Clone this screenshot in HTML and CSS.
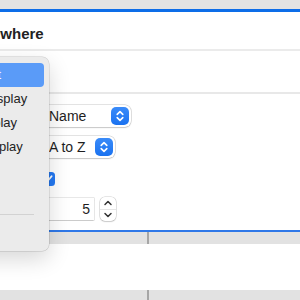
FILE: index.html
```html
<!DOCTYPE html>
<html lang="en">
<head>
  <meta charset="UTF-8" />
  <meta name="viewport" content="width=device-width, initial-scale=1.0"/>
  <title>Search Options</title>
  <link rel="stylesheet" href="styles.css">
</head>
<body>
  <div class="window">
    <div class="topbar"></div>
    <div class="title"><span class="title-text">Anywhere</span></div>
    <div class="toolbar"></div>

    <div class="form">
      <div class="popup popup-wide">
        <span class="popup-text">Name</span>
        <span class="popup-btn">
          <svg width="18" height="18" viewBox="0 0 18 18"><path d="M6.2 7.4 9 4.6 11.8 7.4M6.2 10.6 9 13.4 11.8 10.6" fill="none" stroke="#fff" stroke-width="1.6" stroke-linecap="round" stroke-linejoin="round"/></svg>
        </span>
      </div>

      <div class="popup">
        <span class="popup-text">A to Z</span>
        <span class="popup-btn">
          <svg width="18" height="18" viewBox="0 0 18 18"><path d="M6.2 7.4 9 4.6 11.8 7.4M6.2 10.6 9 13.4 11.8 10.6" fill="none" stroke="#fff" stroke-width="1.6" stroke-linecap="round" stroke-linejoin="round"/></svg>
        </span>
      </div>

      <div class="check-row">
        <span class="checkbox">
          <svg width="14" height="14" viewBox="0 0 14 14"><path d="M3.5 7.3 6 9.8 10.6 4.2" fill="none" stroke="#fff" stroke-width="1.8" stroke-linecap="round" stroke-linejoin="round"/></svg>
        </span>
      </div>

      <div class="number-row">
        <div class="number-field">5</div>
        <div class="stepper">
          <span class="step">
            <svg width="10" height="8" viewBox="0 0 10 8"><path d="M2 5.5 5 2.5 8 5.5" fill="none" stroke="#333" stroke-width="1.5" stroke-linecap="round" stroke-linejoin="round"/></svg>
          </span>
          <span class="step step-down">
            <svg width="10" height="8" viewBox="0 0 10 8"><path d="M2 2.5 5 5.5 8 2.5" fill="none" stroke="#333" stroke-width="1.5" stroke-linecap="round" stroke-linejoin="round"/></svg>
          </span>
        </div>
      </div>
    </div>

    <div class="table">
      <div class="table-head"><div class="col"></div><div class="col"></div></div>
      <div class="table-row"></div>
      <div class="table-head"><div class="col"></div><div class="col"></div></div>
    </div>
  </div>

  <!-- popup menu, left part scrolled out of view -->
  <div class="menu">
    <div class="menu-item active">Default</div>
    <div class="menu-item">Full Display</div>
    <div class="menu-item">In Display</div>
    <div class="menu-item">No Display</div>
    <div class="menu-item"></div>
    <div class="menu-item"></div>
    <div class="menu-sep"></div>
    <div class="menu-item"></div>
  </div>
</body>
</html>
```

FILE: styles.css
```css
body {
  margin: 0;
  background: #fff;
  font-family: "Liberation Sans", Arial, sans-serif;
  color: #1e1e1e;
  overflow: hidden;
  position: relative;
  width: 300px;
  height: 300px;
}

.topbar {
  height: 9px;
  background: #e3e3e3;
  border-bottom: 3px solid #0d6de8;
}

.title {
  height: 39px;
  box-sizing: border-box;
  padding-top: 12px;
  border-bottom: 2px solid #ebebeb;
  white-space: nowrap;
}

.title-text {
  display: inline-block;
  margin-left: -28px;
  font-size: 15px;
  font-weight: bold;
  line-height: 20px;
  color: #222;
}

.toolbar {
  height: 41px;
  border-bottom: 2px solid #e8e8e8;
}

.form {
  display: grid;
  row-gap: 9px;
  grid-auto-rows: 22px;
  padding: 11px 0 10px 41px;
  font-size: 14px;
  justify-items: start;
}

.popup {
  display: flex;
  align-items: center;
  height: 22px;
  box-sizing: border-box;
  padding: 0 2px 0 8px;
  background: #fff;
  border-radius: 6px;
  box-shadow: 0 0 0 0.5px rgba(0,0,0,0.22), 0 1px 1.5px rgba(0,0,0,0.12);
}

.popup-wide {
  width: 90px;
}

.popup-text {
  flex: 1;
  margin-right: 9px;
  white-space: nowrap;
}

.popup-btn {
  width: 18px;
  height: 18px;
  border-radius: 5px;
  background: linear-gradient(#3a8bf9, #1a72f0);
  display: flex;
}

.check-row {
  display: flex;
  align-items: center;
}

.checkbox {
  width: 14px;
  height: 14px;
  border-radius: 3.5px;
  background: #2479f3;
  display: flex;
  margin-top: 1px;
}

.number-row {
  display: flex;
  align-items: center;
  gap: 6px;
}

.number-field {
  width: 53px;
  height: 22px;
  box-sizing: border-box;
  padding-right: 4px;
  text-align: right;
  line-height: 22px;
  background: #fff;
  box-shadow: 0 0 0 0.5px rgba(0,0,0,0.18), 0 0.5px 1px rgba(0,0,0,0.12);
}

.stepper {
  width: 16px;
  height: 24px;
  border-radius: 5px;
  background: #fff;
  box-shadow: 0 0 0 0.5px rgba(0,0,0,0.2), 0 1px 1.5px rgba(0,0,0,0.12);
  display: flex;
  flex-direction: column;
}

.step {
  flex: 1;
  display: flex;
  align-items: center;
  justify-content: center;
}

.step-down {
  border-top: 1px solid #e6e6e6;
}

.table {
  border-top: 2px solid #2f78e8;
}

.table-head {
  display: grid;
  grid-template-columns: 149px 1fr;
  height: 12px;
  background: #e2e2e2;
}

.table-head .col:first-child {
  border-right: 2px solid #a6a6a6;
}

.table-row {
  height: 46px;
  background: #fff;
}

.menu {
  position: absolute;
  top: 57px;
  left: -70px;
  width: 119px;
  padding: 6px 0;
  background: #ebebeb;
  border-radius: 7px;
  box-shadow: 0 0 0 0.5px rgba(0,0,0,0.18), 0 8px 22px rgba(0,0,0,0.16);
  font-size: 13px;
  color: #232323;
}

.menu-item {
  height: 24px;
  line-height: 24px;
  margin: 0 5px;
  padding-left: 25px;
  border-radius: 4px;
  white-space: nowrap;
}

.menu-item.active {
  background: #5a9bf8;
  color: #fff;
}

.menu-sep {
  height: 1px;
  background: #d2d2d2;
  margin: 7px 15px 6px 14px;
}
```
